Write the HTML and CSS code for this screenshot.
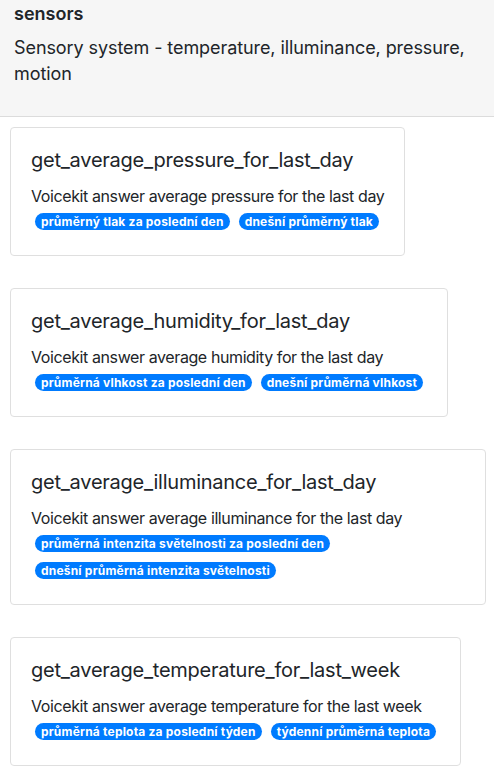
FILE: index.html
```html
<!DOCTYPE html>
<html lang="en">
<head>
<meta charset="utf-8">
<title>sensors</title>
<link rel="stylesheet" href="styles.css">
</head>
<body>
<header class="module-header">
  <h2 class="module-name">sensors</h2>
  <p class="module-desc">Sensory system - temperature, illuminance, pressure, motion</p>
</header>
<main class="intents">
  <section class="card">
    <h5 class="card-title">get_average_pressure_for_last_day</h5>
    <p class="card-text">Voicekit answer average pressure for the last day</p>
    <div class="badges">
      <span class="badge">průměrný tlak za poslední den</span>
      <span class="badge">dnešní průměrný tlak</span>
    </div>
  </section>
  <section class="card">
    <h5 class="card-title">get_average_humidity_for_last_day</h5>
    <p class="card-text">Voicekit answer average humidity for the last day</p>
    <div class="badges">
      <span class="badge">průměrná vlhkost za poslední den</span>
      <span class="badge">dnešní průměrná vlhkost</span>
    </div>
  </section>
  <section class="card">
    <h5 class="card-title">get_average_illuminance_for_last_day</h5>
    <p class="card-text">Voicekit answer average illuminance for the last day</p>
    <div class="badges">
      <span class="badge">průměrná intenzita světelnosti za poslední den</span>
      <span class="badge">dnešní průměrná intenzita světelnosti</span>
    </div>
  </section>
  <section class="card">
    <h5 class="card-title">get_average_temperature_for_last_week</h5>
    <p class="card-text">Voicekit answer average temperature for the last week</p>
    <div class="badges">
      <span class="badge">průměrná teplota za poslední týden</span>
      <span class="badge">týdenní průměrná teplota</span>
    </div>
  </section>
</main>
</body>
</html>
```
FILE: styles.css
```css
html, body {
  margin: 0;
  padding: 0;
  background: #fff;
  color: #212529;
  font-family: Inter, "Liberation Sans", Arial, sans-serif;
}
.module-header {
  background: #f6f6f6;
  border-bottom: 1px solid #dcdcdc;
  padding: 2px 14px 29px;
}
.module-name {
  margin: 0;
  font-size: 18px;
  line-height: 24px;
  font-weight: 600;
}
.module-desc {
  margin: 9px 0 0;
  font-size: 18px;
  line-height: 26px;
  letter-spacing: -0.08px;
}
.intents {
  display: flex;
  flex-direction: column;
  align-items: flex-start;
  gap: 32px;
  padding: 10px 8px 0 10px;
}
.card {
  border: 1px solid #dfdfdf;
  border-radius: 4px;
  padding: 20px;
  max-width: 100%;
  box-sizing: border-box;
}
.card-title {
  margin: 0 0 12px;
  font-size: 20px;
  line-height: 24px;
  font-weight: 400;
  letter-spacing: -0.25px;
}
.card-text {
  margin: 0;
  font-size: 16px;
  line-height: 24px;
  letter-spacing: -0.4px;
}
.badges {
  display: flex;
  flex-wrap: wrap;
  column-gap: 1px;
}
.badge {
  display: inline-block;
  margin: 5px 4px 5px;
  padding: 0 6px;
  height: 17px;
  line-height: 17px;
  font-size: 12px;
  font-weight: 700;
  letter-spacing: 0.2px;
  color: #fff;
  background: #007bff;
  border-radius: 9px;
  white-space: nowrap;
}
```
